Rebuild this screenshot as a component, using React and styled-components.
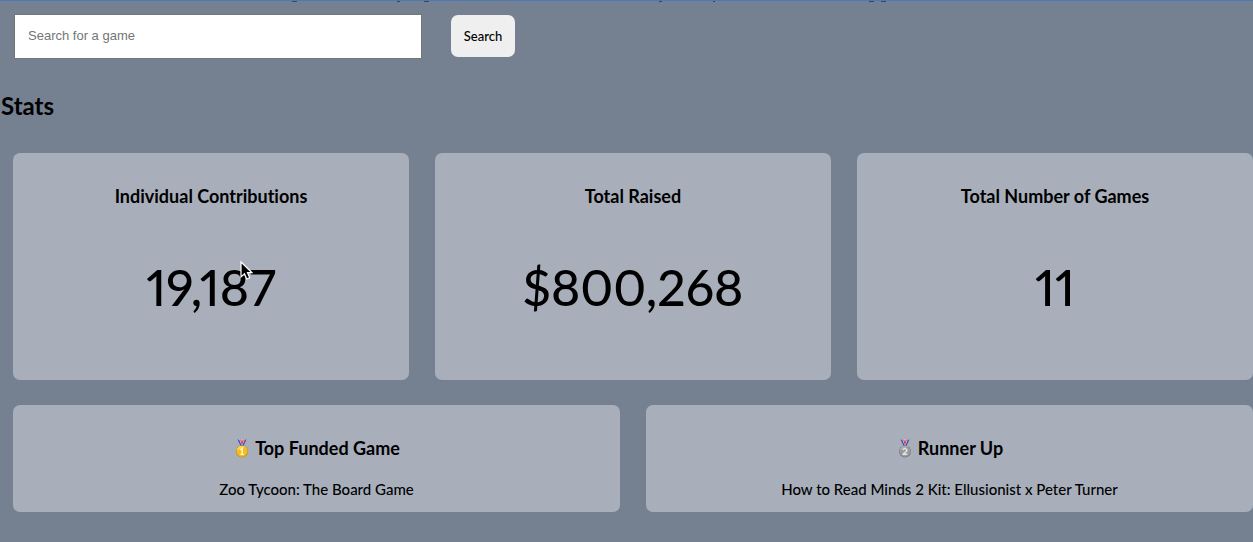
import React from "react";
import styled, { createGlobalStyle } from "styled-components";

const GlobalStyle = createGlobalStyle`
  * { box-sizing: border-box; }
  body {
    margin: 0;
    background: #758190;
    color: #000;
    font-family: Lato, "Liberation Sans", sans-serif;
    font-size: 16px;
    font-weight: 500;
    font-variant-ligatures: none;
  }
`;

const Page = styled.main`
  position: relative;
  border-top: 1px solid #4a7ab8;
  padding-bottom: 30px;
`;

const Descenders = styled.svg`
  position: absolute;
  top: 0;
  left: 0;
`;

const SearchForm = styled.form`
  display: flex;
  align-items: flex-start;
  gap: 29px;
  padding: 13px 0 0 14px;
`;

const SearchInput = styled.input`
  width: 408px;
  height: 45px;
  padding: 0 13px 2px;
  border: 1px solid #767676;
  border-radius: 0;
  background: #fff;
  font-family: "Liberation Sans", Arial, sans-serif;
  font-size: 13px;
  &::placeholder { color: #757575; }
`;

const SearchButton = styled.button`
  width: 64px;
  height: 42px;
  margin-top: 1px;
  padding: 0;
  border: 0;
  border-radius: 7px;
  background: #efefef;
  color: #000;
  font-family: inherit;
  font-size: 13px;
  font-weight: inherit;
`;

const Heading = styled.h2`
  margin: 32px 0 33px 1px;
  font-size: 24px;
  line-height: 29px;
`;

const Cards = styled.section`
  display: flex;
  gap: 26px;
  margin: 0 0 25px 13px;
`;

const Card = styled.article`
  flex: 1 1 0;
  min-width: 0;
  min-height: ${(p) => (p.$tall ? "227px" : "107px")};
  padding-top: 32px;
  border-radius: 7px;
  background: #a8afbb;
  text-align: center;
`;

const CardTitle = styled.h3`
  display: flex;
  justify-content: center;
  align-items: center;
  gap: 4px;
  margin: 0;
  font-size: 18px;
  line-height: 23px;
`;

const Figure = styled.p`
  margin: 48px 0 0;
  font-size: 50px;
  line-height: 62px;
  font-variant-numeric: proportional-nums;
`;

const GameName = styled.p`
  margin: 19px 0 0;
  font-size: 15px;
  line-height: 20px;
`;

const Pointer = styled.svg`
  position: absolute;
  left: 239px;
  top: 259px;
`;

function Medal({ rank, light, base, dark }) {
  return (
    <svg width="18" height="20" viewBox="0 0 18 20" aria-hidden="true">
      <path d="M5 .5h8L10.500 7h-3z" fill="#e9e5ee" />
      <path d="M4.500 .5h1.700L9 7H7.500z" fill="#3d55b0" />
      <path d="M7 .5h1.200L9.500 4 9 6z" fill="#d8414d" />
      <path d="M11.800 .5h1.700L10.500 7H9z" fill="#3d55b0" />
      <path d="M9.800 .5H11L9 6l-.5-2z" fill="#d8414d" />
      <circle cx="9" cy="12.500" r="6" fill={dark} />
      <circle cx="9" cy="12.200" r="5.500" fill={base} />
      <path d="M4 11a5 5 0 0 1 8-3z" fill={light} />
      {rank === 1 ? (
        <path d="M7.300 10.800 9.200 9.500V15.300M7.500 15.300h3.400" fill="none" stroke="#fff5bd" strokeWidth="1.500" />
      ) : (
        <path d="M7 11c.5-2 4-1.600 4 .3 0 1.500-3.200 2.200-3.700 3.900h4" fill="none" stroke="#e6e6e6" strokeWidth="1.400" />
      )}
    </svg>
  );
}

const totals = [
  ["Individual Contributions", "19,187"],
  ["Total Raised", "$800,268"],
  ["Total Number of Games", "11"],
];

export default function App() {
  return (
    <>
      <GlobalStyle />
      <Page>
        <Descenders width="900" height="1" aria-hidden="true">
          <path d="M292 .5h5M397 .5h3M424 .5h5M659 .5h3M713 .5h2M869 .5h5M881 .5h5" stroke="#3a4655" />
        </Descenders>
        <SearchForm onSubmit={(e) => e.preventDefault()}>
          <SearchInput type="text" aria-label="Search for a game" placeholder="Search for a game" />
          <SearchButton type="submit">Search</SearchButton>
        </SearchForm>
        <Heading>Stats</Heading>
        <Cards>
          {totals.map(([title, value]) => (
            <Card key={title} $tall>
              <CardTitle>{title}</CardTitle>
              <Figure>{value}</Figure>
            </Card>
          ))}
        </Cards>
        <Cards>
          <Card>
            <CardTitle>
              <Medal rank={1} light="#ffdc50" base="#f4bd22" dark="#c88d13" />
              Top Funded Game
            </CardTitle>
            <GameName>Zoo Tycoon: The Board Game</GameName>
          </Card>
          <Card>
            <CardTitle>
              <Medal rank={2} light="#adaeb0" base="#999b9d" dark="#77797c" />
              Runner Up
            </CardTitle>
            <GameName>How to Read Minds 2 Kit: Ellusionist x Peter Turner</GameName>
          </Card>
        </Cards>
        <Pointer width="14" height="20" viewBox="0 0 14 20" aria-hidden="true">
          <path d="M2 2v15l3.500-3.200 2.200 5.200 3-1.300-2.200-5h4.600z" fill="#000" stroke="#fff" strokeWidth="1.200" />
        </Pointer>
      </Page>
    </>
  );
}
